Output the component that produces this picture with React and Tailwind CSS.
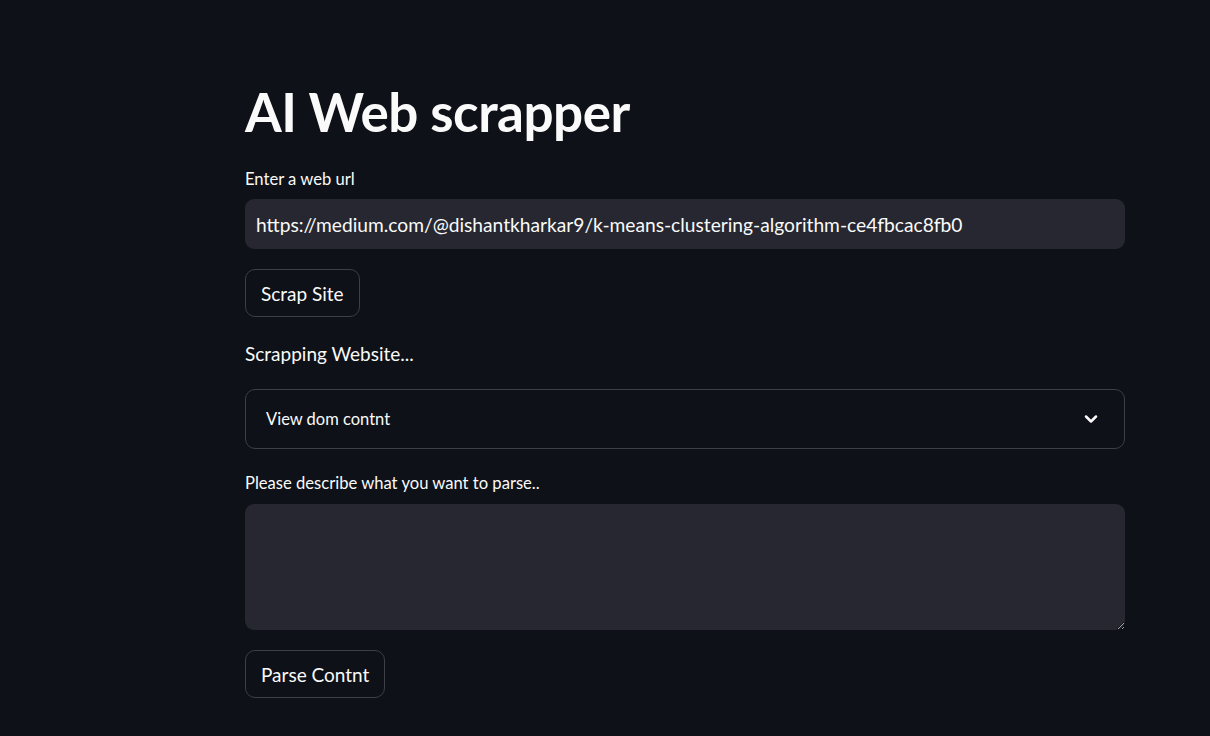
import React from 'react';
import { ChevronDown } from 'lucide-react';

const font = { fontFamily: '"Source Sans Pro", Lato, "Noto Sans", sans-serif' };

const Button = ({ children }) => (
  <button className="h-[48px] px-[15px] rounded-[10px] border border-[#3d3f47] bg-[#0e1117] text-[19px] text-[#fafafa] leading-none">
    {children}
  </button>
);

export default function App() {
  return (
    <div className="min-h-[736px] bg-[#0e1117] text-[#fafafa]" style={font}>
      <div className="ml-[245px] w-[880px] pt-[79px]">
        <h1 className="text-[53px] font-bold leading-[66px] tracking-[-0.5px]">AI Web scrapper</h1>

        <label className="block mt-[23px] text-[16.6px] leading-[22px]">Enter a web url</label>
        <input
          className="mt-[9px] w-full h-[50px] rounded-[9px] bg-[#262730] px-[11px] text-[19.2px] text-[#fafafa] outline-none"
          defaultValue="https://medium.com/@dishantkharkar9/k-means-clustering-algorithm-ce4fbcac8fb0"
          style={font}
        />

        <div className="mt-[20px]">
          <Button>Scrap Site</Button>
        </div>

        <p className="mt-[23px] text-[19px] leading-[28px]">Scrapping Website...</p>

        <div className="mt-[21px] h-[60px] rounded-[10px] border border-[#3d3f47] flex items-center justify-between pl-[20px] pr-[23px]">
          <span className="text-[16.5px]">View dom contnt</span>
          <ChevronDown size={20} strokeWidth={3} />
        </div>

        <label className="block mt-[23px] text-[16.6px] leading-[22px]">Please describe what you want to parse..</label>
        <textarea
          className="mt-[10px] block w-full h-[126px] rounded-[9px] bg-[#262730] px-[11px] py-[10px] text-[19px] text-[#fafafa] outline-none resize-y"
          style={font}
        />

        <div className="mt-[20px]">
          <Button>Parse Contnt</Button>
        </div>
      </div>
    </div>
  );
}
